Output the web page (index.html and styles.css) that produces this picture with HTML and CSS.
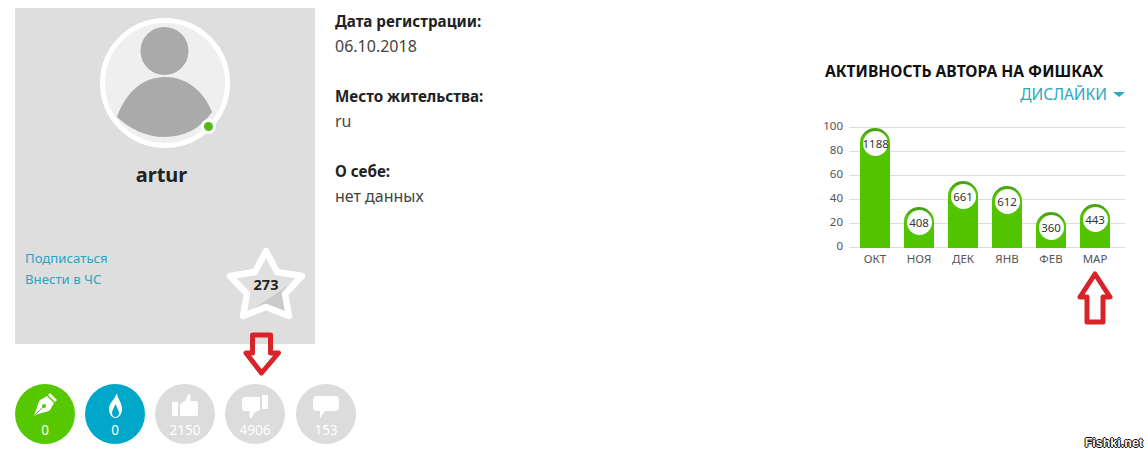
FILE: index.html
```html
<!DOCTYPE html>
<html lang="ru">
<head>
  <meta charset="UTF-8" />
  <title>artur</title>
  <link rel="stylesheet" href="styles.css">
</head>
<body>
  <div class="page">
    <div class="left">
      <div class="card">
        <div class="avatar">
          <svg width="130" height="130" viewBox="0 0 130 130">
            <circle cx="65" cy="65" r="62.5" fill="#efefef" stroke="#fff" stroke-width="5"/>
            <circle cx="64.5" cy="33" r="24" fill="#aaa"/>
            <path d="M17 99C26 73 44 59 65 59C86 59 103 72 112 94C100 111 84 119 64 119C46 119 30 111 17 99Z" fill="#aaa"/>
            <circle cx="108.5" cy="108.5" r="7.5" fill="#fff"/>
            <circle cx="108.5" cy="108.5" r="4.5" fill="#55b71a"/>
          </svg>
        </div>
        <div class="name">artur</div>
        <div class="card-foot">
          <div class="links">
            <a href="#">Подписаться</a>
            <a href="#">Внести в ЧС</a>
          </div>
          <div class="star">
            <svg width="80" height="76" viewBox="0 0 80 76">
              <path d="M40 6L51 27L76 31L59 49L63 71L40 62L17 71L21 49L4 31L29 27Z" fill="#e0e0e0"/>
              <path d="M76 31L17 71L40 62L63 71L59 49Z" fill="#cacaca"/>
              <path d="M40 6L51 27L76 31L59 49L63 71L40 62L17 71L21 49L4 31L29 27Z" fill="none" stroke="#fff" stroke-width="6.5" stroke-linejoin="round"/>
            </svg>
            <span class="star-num">273</span>
          </div>
        </div>
      </div>
      <div class="stats">
        <div class="stat stat-green">
          <svg width="24" height="26" viewBox="0 0 24 26">
            <path d="M17 0L24 7L22 9L15 2ZM14 3L21 10L17 17C13 20 6 19 0 24C4 17 4 12 7 7Z" fill="#fff"/>
            <path d="M0 24L10 14" stroke="#55c800"/>
            <circle cx="11" cy="13" r="2" fill="#55c800"/>
          </svg>
          <span>0</span>
        </div>
        <div class="stat stat-blue">
          <svg width="13" height="26" viewBox="0 0 13 26">
            <path fill-rule="evenodd" d="M8 0C8 5 13 9 13 16C13 21 10 25 6.5 25C3 25 0 21 0 16C0 10 4 9 8 0ZM6.5 11C5 15 3 17 3 20C3 23 5 24 6.5 24C8 24 10 23 10 20C10 17 8 15 6.5 11Z" fill="#fff"/>
          </svg>
          <span>0</span>
        </div>
        <div class="stat">
          <svg width="26" height="26" viewBox="0 0 26 26">
            <path d="M0 9H6V23H0ZM8 11L13 8L17 0C19 2 19 6 18 8H24C25 8 26 9 26 10V21C26 22 25 23 24 23H8Z" fill="#fff"/>
          </svg>
          <span>2150</span>
        </div>
        <div class="stat">
          <svg width="26" height="26" viewBox="0 -2 26 26">
            <path d="M20 0H26V14H20ZM0 4C0 3 1 2 3 2H18V15L13 17L9 24C7 22 7 18 8 16H2C1 16 0 15 0 13Z" fill="#fff"/>
          </svg>
          <span>4906</span>
        </div>
        <div class="stat stat-last">
          <svg width="26" height="26" viewBox="0 -3 26 26">
            <path d="M4 0H22C24.500 0 26 1.500 26 4V11C26 13.500 24.500 15 22 15H12L7 22V15H4C1.500 15 0 13.500 0 11V4C0 1.500 1.500 0 4 0Z" fill="#fff"/>
          </svg>
          <span>153</span>
        </div>
      </div>
    </div>

    <div class="info">
      <div class="info-block">
        <b>Дата регистрации:</b>
        <span>06.10.2018</span>
      </div>
      <div class="info-block">
        <b>Место жительства:</b>
        <span>ru</span>
      </div>
      <div class="info-block">
        <b>О себе:</b>
        <span>нет данных</span>
      </div>
    </div>

    <div class="activity">
      <h2>АКТИВНОСТЬ АВТОРА НА ФИШКАХ</h2>
      <div class="filter">ДИСЛАЙКИ <i class="caret"></i></div>
      <div class="chart">
        <div class="y-axis">
          <span>100</span><span>80</span><span>60</span><span>40</span><span>20</span><span>0</span>
        </div>
        <div class="chart-main">
          <div class="plot">
            <div class="col"><div class="bar" style="height: 120px"><span>1188</span></div></div>
            <div class="col"><div class="bar" style="height: 41px"><span>408</span></div></div>
            <div class="col"><div class="bar" style="height: 67px"><span>661</span></div></div>
            <div class="col"><div class="bar" style="height: 62px"><span>612</span></div></div>
            <div class="col"><div class="bar" style="height: 36px"><span>360</span></div></div>
            <div class="col"><div class="bar" style="height: 44px"><span>443</span></div></div>
          </div>
          <div class="months">
            <span>ОКТ</span><span>НОЯ</span><span>ДЕК</span><span>ЯНВ</span><span>ФЕВ</span><span>МАР</span>
          </div>
        </div>
      </div>
    </div>
  </div>

  <!-- red arrows drawn on top of the screenshot -->
  <svg class="arrow arrow-down" width="39" height="45" viewBox="0 0 39 45">
    <path d="M9.500 3H27.500V21H35.500L18.500 41L3 21H9.500Z" fill="none" stroke="#d8232a" stroke-width="5" stroke-linejoin="round"/>
  </svg>
  <svg class="arrow arrow-up" width="38" height="56" viewBox="0 0 38 56">
    <path d="M19 4L34 27H27V52H11V27H4Z" fill="none" stroke="#d8232a" stroke-width="5" stroke-linejoin="round"/>
  </svg>
  <div class="watermark">Fishki.net</div>
</body>
</html>
```

FILE: styles.css
```css
body {
  font-family: 'Noto Sans', sans-serif;
  background-color: #fff;
  color: #444;
  margin: 0;
  font-size: 16px;
}

.page {
  display: flex;
  padding: 8px 23px 0 15px;
}

.left {
  width: 300px;
  flex: none;
}

.card {
  width: 300px;
  height: 336px;
  background: #dedede;
  box-sizing: border-box;
  padding-top: 10px;
  display: flex;
  flex-direction: column;
}

.avatar {
  height: 130px;
  display: flex;
  justify-content: center;
}

.name {
  margin-top: 12px;
  padding-right: 7px;
  text-align: center;
  font-size: 20px;
  line-height: 30px;
  font-weight: 700;
  color: #222;
}

.card-foot {
  display: flex;
  justify-content: space-between;
  padding: 0 9px 0 10px;
  margin-top: 55px;
}

.links {
  display: flex;
  flex-direction: column;
  padding-top: 3px;
}

.links a {
  font-size: 13.2px;
  line-height: 21px;
  color: #2aa5c0;
  text-decoration: none;
}

.star {
  display: grid;
  place-items: center;
  width: 80px;
  height: 76px;
}

.star svg, .star-num {
  grid-area: 1 / 1;
}

.star-num {
  font-size: 14.5px;
  font-weight: 700;
  color: #222;
  margin-top: 2px;
}

.stats {
  display: flex;
  gap: 10px;
  width: 345px;
  margin-top: 40px;
}

.stat {
  width: 60px;
  height: 60px;
  flex: none;
  border-radius: 50%;
  background: #dcdcdc;
  color: #fff;
  display: flex;
  flex-direction: column;
  align-items: center;
  font-size: 13.5px;
  padding-top: 9px;
  box-sizing: border-box;
}

.stat span {
  line-height: 16px;
  margin-top: 3px;
}

.stat-green {
  background: #55c800;
}

.stat-blue {
  background: #00a7c8;
}

.stat-last {
  margin-left: 1px;
}

.info {
  margin-left: 20px;
  display: flex;
  flex-direction: column;
  gap: 27px;
  padding-top: 2px;
}

.info-block {
  display: flex;
  flex-direction: column;
  line-height: 24px;
}

.info-block b {
  color: #222;
  font-size: 15.2px;
  line-height: 22px;
  margin-bottom: 2px;
}

.activity {
  margin-left: auto;
  width: 300px;
  padding-top: 53px;
  display: flex;
  flex-direction: column;
}

h2 {
  font-size: 15.6px;
  line-height: 20px;
  margin: 0;
  color: #111;
  white-space: nowrap;
}

.filter {
  align-self: flex-end;
  color: #2aa9bd;
  font-size: 15.5px;
  line-height: 26px;
  display: flex;
  align-items: center;
  gap: 6px;
}

.caret {
  border-left: 6px solid transparent;
  border-right: 6px solid transparent;
  border-top: 5px solid #2aa9bd;
}

.chart {
  display: flex;
  margin-top: 20px;
  margin-left: -24px;
}

.y-axis {
  width: 42px;
  margin-top: -13px;
  display: flex;
  flex-direction: column;
  text-align: right;
  font-size: 11.5px;
  color: #555;
}

.y-axis span {
  height: 24px;
  line-height: 24px;
}

.chart-main {
  margin-left: 6px;
  width: 276px;
}

.plot {
  height: 121px;
  display: flex;
  align-items: flex-end;
  padding-left: 11px;
  gap: 14px;
  background: repeating-linear-gradient(#ddd 0, #ddd 1px, transparent 1px, transparent 24px);
}

.col {
  width: 30px;
}

.bar {
  box-sizing: border-box;
  background: #52c400;
  border-top: 3px solid #4aa514;
  border-radius: 15px 15px 0 0;
  display: flex;
  justify-content: center;
}

.bar span {
  width: 25px;
  height: 25px;
  flex: none;
  border-radius: 50%;
  background: #fff;
  color: #333;
  font-size: 11.5px;
  line-height: 25px;
  text-align: center;
}

.months {
  display: flex;
  gap: 14px;
  padding-left: 11px;
  margin-top: 3px;
  font-size: 11.5px;
  color: #555;
}

.months span {
  width: 30px;
  text-align: center;
}

.arrow {
  position: absolute;
}

.arrow-down {
  left: 243px;
  top: 332px;
}

.arrow-up {
  left: 1076px;
  top: 270px;
}

.watermark {
  position: absolute;
  right: 5px;
  top: 436px;
  font-family: 'Liberation Sans', sans-serif;
  font-weight: 700;
  font-size: 12.5px;
  color: #fff;
  text-shadow: -1px 0 #000, 1px 0 #000, 0 -1px #000, 0 1px #000;
}
```
